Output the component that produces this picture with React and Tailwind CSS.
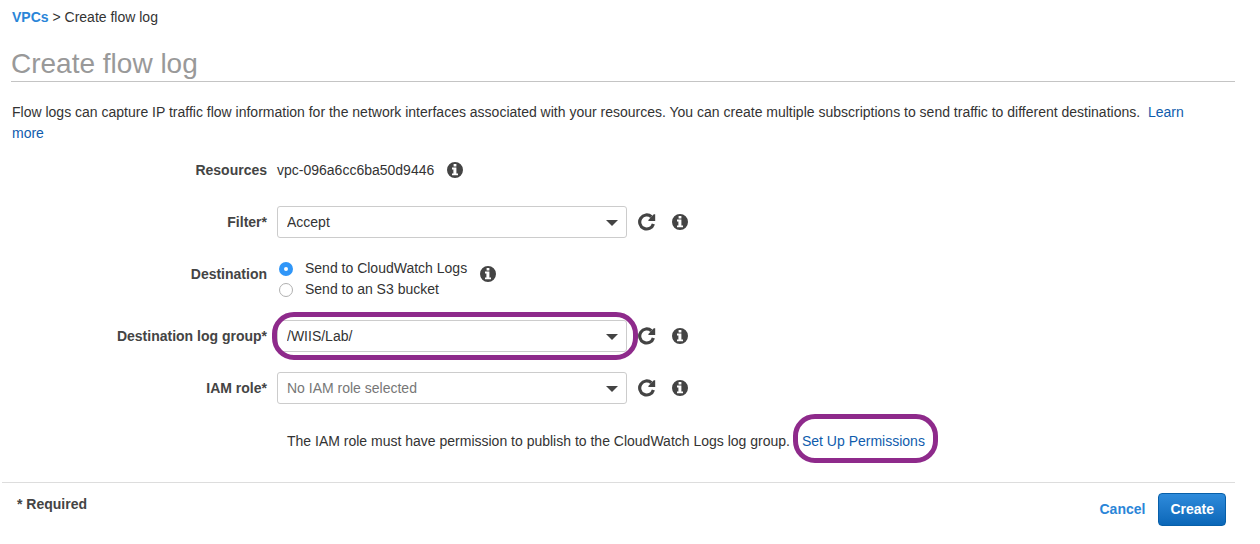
function InfoIcon() {
  return (
    <svg viewBox="0 0 16 16" className="size-4 shrink-0" fill="#444444" aria-hidden="true">
      <path
        fillRule="evenodd"
        d="M8 0a8 8 0 1 1 0 16A8 8 0 0 1 8 0ZM6.6 2v2.4h2.8V2ZM5 5.6v1.8h1.4v4H5v1.9h6v-1.9H9.4V5.6Z"
      />
    </svg>
  );
}

function RefreshIcon() {
  return (
    <svg viewBox="0 0 18 18" className="size-[18px]" aria-hidden="true">
      <path d="M15.4 11A7 7 0 1 1 13.4 3.8" fill="none" stroke="#444444" strokeWidth="3.2" />
      <path d="M17.2 1.2v6.8h-6.8v-1L15.8 1.2Z" fill="#444444" />
    </svg>
  );
}

function Info({ label }) {
  return (
    <button type="button" aria-label={label} className="shrink-0">
      <InfoIcon />
    </button>
  );
}

function Row({ label, htmlFor, children }) {
  return (
    <div className="flex min-h-8 items-center gap-[10px]">
      <label htmlFor={htmlFor} className="w-[255px] shrink-0 text-right font-bold text-[#444444]">
        {label}
      </label>
      {children}
    </div>
  );
}

function SelectField({ id, label, value, muted, marked }) {
  return (
    <Row label={label} htmlFor={id}>
      <div className="relative w-[350px]">
        <select
          id={id}
          defaultValue={value}
          className={
            "block h-8 w-full appearance-none rounded-[3px] border border-[#cccccc] bg-white pl-[9px] pr-8 " +
            (muted ? "text-[#777777]" : "text-[#333333]")
          }
        >
          <option>{value}</option>
        </select>
        <svg
          viewBox="0 0 12 6"
          className="pointer-events-none absolute right-[9px] top-[14px] h-[6px] w-3"
          fill="#444444"
          aria-hidden="true"
        >
          <path d="M0 0h12L6 6Z" />
        </svg>
        {marked && (
          <span className="pointer-events-none absolute -bottom-[8px] -left-[5px] -right-[11px] -top-[8px] rounded-[22px] border-[5px] border-[#8e2a8b]" />
        )}
      </div>
      <div className="ml-px flex items-center gap-4">
        <button type="button" aria-label={"Refresh " + label}>
          <RefreshIcon />
        </button>
        <Info label={label + " information"} />
      </div>
    </Row>
  );
}

function Choice({ id, label, checked }) {
  return (
    <div className="flex h-[21px] items-center gap-3">
      <input
        id={id}
        type="radio"
        name="destination"
        defaultChecked={checked}
        className="size-[14px] appearance-none rounded-full border border-[#b0b0b0] bg-white checked:border-[5px] checked:border-[#3096f8]"
      />
      <label htmlFor={id}>{label}</label>
    </div>
  );
}

export default function App() {
  return (
    <div className="bg-white pr-[25px] font-['Liberation_Sans',Arial,sans-serif] text-[14px] leading-[21px] text-[#333333]">
      <header className="pl-[11px] pt-[7px]">
        <nav aria-label="Breadcrumb" className="pl-px">
          <a href="#vpcs" className="font-bold text-[#2a85d8]">
            VPCs
          </a>{" "}
          &gt; Create flow log
        </nav>
        <h1 className="mt-[19px] border-b border-[#c4c4c4] text-[28px] leading-[34px] text-[#999999]">
          Create flow log
        </h1>
      </header>

      <main>
        <p className="mt-5 pl-3 pr-6">
          Flow logs can capture IP traffic flow information for the network interfaces associated with your resources.
          You can create multiple subscriptions to send traffic to different destinations.&nbsp;{" "}
          <a href="#learn" className="text-[#0f5cad]">
            Learn more
          </a>
        </p>

        <form id="flow-log" className="mt-[10px] pl-3">
          <Row label="Resources">
            <span className="mr-[3px]">vpc-096a6cc6ba50d9446</span>
            <Info label="Resources information" />
          </Row>
          <div className="mt-5">
            <SelectField id="filter" label="Filter*" value="Accept" />
          </div>
          <div className="mt-5 flex items-start gap-[10px]">
            <span className="mt-[6px] w-[255px] shrink-0 text-right font-bold text-[#444444]">Destination</span>
            <div className="ml-[2px] mr-[3px]">
              <Choice id="cloudwatch" label="Send to CloudWatch Logs" checked />
              <Choice id="s3" label="Send to an S3 bucket" />
            </div>
            <div className="mt-2 flex">
              <Info label="Destination information" />
            </div>
          </div>
          <div className="mt-5">
            <SelectField id="log-group" label="Destination log group*" value="/WIIS/Lab/" marked />
          </div>
          <div className="mt-5">
            <SelectField id="iam-role" label="IAM role*" value="No IAM role selected" muted />
          </div>
          <p className="mt-[27px] flex gap-3 pl-[275px]">
            <span>The IAM role must have permission to publish to the CloudWatch Logs log group.</span>
            <a href="#permissions" className="relative text-[#0f5cad]">
              Set Up Permissions
              <span className="pointer-events-none absolute -bottom-[11px] -left-[9px] -right-[13px] -top-[17px] rounded-[22px] border-[5px] border-[#8e2a8b]" />
            </a>
          </p>
        </form>
      </main>

      <footer className="ml-[2px] mt-[30px] flex items-start justify-between border-t border-[#dddddd] pb-4 pl-[15px] pr-[9px] pt-[10px]">
        <span className="mt-px font-bold text-[#444444]">* Required</span>
        <div className="flex items-center gap-[13px]">
          <button type="button" className="font-bold text-[#2a85d8]">
            Cancel
          </button>
          <button
            type="submit"
            form="flow-log"
            className="h-[33px] rounded-[4px] border border-[#075fa9] bg-linear-to-b from-[#2e8bdb] to-[#0a67b8] px-[11px] font-bold text-white"
          >
            Create
          </button>
        </div>
      </footer>
    </div>
  );
}
